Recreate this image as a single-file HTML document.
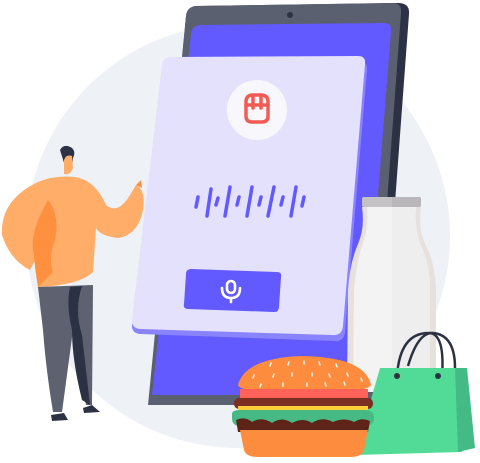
<!DOCTYPE html>
<html><head><meta charset="utf-8"><style>html,body{margin:0;padding:0;background:#fff}svg{display:block}</style></head>
<body>
<svg width="480" height="463" viewBox="0 0 480 463" xmlns="http://www.w3.org/2000/svg">
<circle cx="238" cy="236" r="212" fill="#eef2f6"/>
<!-- phone -->
<path d="M196 6 L398 3 Q410 3 409 14 L380 405 L150 405 L186 16 Q187 7 196 6Z" fill="#2c3244"/>
<path d="M196 6 L393 3 Q402 3 401 13 L372 405 L148 405 L186 16 Q187 7 196 6Z" fill="#5b6070"/>
<circle cx="290" cy="15" r="3" fill="#2c3244"/>
<path d="M200 25 L384 23 Q392 23 391 32 L362 395 L152 395 L191 34 Q192 26 200 25Z" fill="#6259ff"/>
<!-- card -->
<path d="M172 63 L360 62 Q368 62 367 70 L345 332 Q344 342 334 341 L140 334 Q131 333 132 324 L163 71 Q164 63 172 63Z" fill="#8a83ff"/>
<path d="M172 57 L358 56 Q366 56 365 64 L343 326 Q342 336 332 335 L140 329 Q131 328 132 319 L162 65 Q163 57 172 57Z" fill="#e4e1fd"/>
<circle cx="257" cy="110" r="30" fill="#f8f8fc"/>
<g fill="none" stroke="#f25c54" stroke-width="3.5" stroke-linejoin="round" stroke-linecap="round">
<path d="M246 102 Q246 95 253 95 L261 95 Q268 95 268 102 L268 116 Q268 122 262 122 L252 122 Q246 122 246 116Z"/>
<path d="M246 105 L268 105 M253 96 L253 108 M261 96 L261 108"/>
</g>
<g stroke="#6259ff" stroke-width="3.5" stroke-linecap="round">
<line x1="196" y1="207" x2="198" y2="197"/>
<line x1="207" y1="216" x2="211" y2="189"/>
<line x1="216" y1="205" x2="218" y2="198"/>
<line x1="225" y1="216" x2="230" y2="187"/>
<line x1="237" y1="205" x2="239" y2="197"/>
<line x1="247" y1="216" x2="252" y2="187"/>
<line x1="259" y1="205" x2="261" y2="197"/>
<line x1="268" y1="216" x2="274" y2="187"/>
<line x1="281" y1="205" x2="283" y2="197"/>
<line x1="291" y1="216" x2="296" y2="187"/>
<line x1="302" y1="206" x2="304" y2="197"/>
</g>
<path d="M191 269 L277 272 Q282 272 281 277 L279 307 Q279 312 274 312 L188 309 Q183 309 184 304 L186 274 Q186 269 191 269Z" fill="#6259ff"/>
<g fill="none" stroke="#fff" stroke-width="2.6" stroke-linecap="round">
<rect x="227" y="281" width="8" height="12" rx="4"/>
<path d="M222 288 Q222 298 231 298 Q240 298 240 288 M231 298 L231 302"/>
</g>
<!-- man -->
<path d="M60 150 Q64 143 72 148 Q76 152 73 158 L72 168 Q68 170 65 166Z" fill="#2c3244"/>
<path d="M64 160 Q66 154 72 156 L73 168 Q70 176 64 174Z" fill="#ffad69"/>
<path d="M38 182 Q55 175 75 177 Q95 180 106 205 Q118 215 130 195 L136 185 Q146 190 143 210 Q138 235 118 238 Q100 236 96 228 L93 272 Q80 285 38 287 Q35 270 38 255 L30 270 Q10 260 2 235 Q0 200 38 182Z" fill="#ffad69"/>
<path d="M48 200 Q60 215 55 240 Q48 258 53 272 L38 287 Q35 270 34 255 Q28 235 48 200Z" fill="#ff9040"/>
<path d="M136 185 L141 180 L142 188Z" fill="#ff9040"/>
<path d="M38 287 L93 285 L92 405 L86 405 Q75 360 73 330 L62 412 L53 412 Q46 370 43 330Z" fill="#5d6170"/>
<path d="M70 287 L82 286 Q74 310 82 335 Q86 370 90 405 L82 400 Q72 360 72 330 Q66 305 70 287Z" fill="#2c3244"/>
<path d="M51 415 L64 413 L68 420 L52 421Z" fill="#2c3244"/>
<path d="M83 408 L92 405 L100 412 L84 413Z" fill="#2c3244"/>
<!-- milk bottle -->
<path d="M362 207 L421 207 Q418 228 425 244 Q435 262 436 290 L436 392 L347 392 L348 290 Q350 262 358 244 Q365 228 362 207Z" fill="#e6e1dc"/>
<path d="M367 207 L416 207 Q414 228 421 246 Q430 264 430 290 L430 392 L353 392 L354 290 Q356 264 362 246 Q369 228 367 207Z" fill="#f3f3f3"/>
<path d="M392 207 L416 207 Q414 228 421 246 Q430 264 430 290 L430 392 L392 392Z" fill="#eeeeee"/>
<rect x="362" y="197" width="59" height="10" rx="2" fill="#c4c2c4"/>
<rect x="392" y="197" width="29" height="10" rx="2" fill="#b9b7b9"/>
<!-- bag -->
<g fill="none" stroke="#2c3244" stroke-width="2.5">
<path d="M397 376 Q400 332 430 333 Q445 335 442 376"/>
<path d="M408 366 Q418 332 433 333 Q455 335 455 368"/>
</g>
<path d="M380 368 L455 368 L462 452 L355 455Z" fill="#52db96"/>
<path d="M455 368 L467 368 L475 448 L458 452Z" fill="#44bb85"/>
<circle cx="397" cy="376" r="3" fill="#2c3244"/><circle cx="438" cy="376" r="3" fill="#2c3244"/>
<!-- burger -->
<path d="M238 385 Q245 358 302 356 Q365 357 371 385 Q368 393 302 393 Q240 393 238 385Z" fill="#fe8c3e"/>
<g stroke="#fff3e6" stroke-width="1.5" stroke-linecap="round">
<path d="M270 366 l1 -3 M288 365 l1 -3 M304 364 l0 -3 M320 365 l-1 -3 M337 367 l-1 -3 M253 378 l1 -3 M273 377 l1 -3 M292 376 l0 -3 M312 376 l0 -3 M330 377 l-1 -3 M348 376 l-1 -3 M362 381 l-1 -3 M260 387 l1 -3 M283 386 l0 -3 M307 386 l0 -3 M326 386 l-1 -3 M345 385 l-1 -3"/>
</g>
<rect x="240" y="389" width="128" height="11" fill="#ff6258"/>
<rect x="234" y="398" width="139" height="11" rx="5" fill="#7d2e22"/>
<rect x="238" y="406" width="130" height="7" fill="#ffcc3a"/>
<path d="M232 414 Q232 410 240 410 L365 410 Q374 410 374 418 Q374 426 365 426 L240 426 Q232 426 232 418Z" fill="#46b984"/>
<path d="M236 420 Q245 416 252 422 Q262 416 272 423 Q282 416 292 423 Q303 417 312 423 Q322 416 333 422 Q344 417 354 422 Q362 417 370 421 L368 432 L238 432Z" fill="#5e2418"/>
<path d="M240 430 L368 430 L364 450 Q362 457 350 457 L258 457 Q246 457 244 450Z" fill="#fe8c3e"/>
</svg>
</body></html>
